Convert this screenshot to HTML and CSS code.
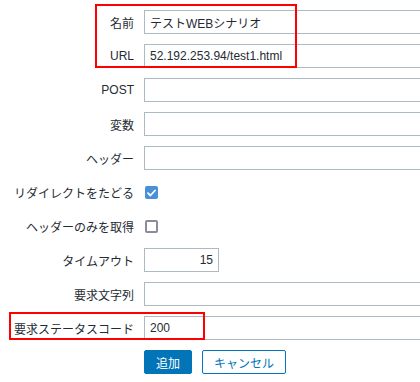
FILE: index.html
```html
<!DOCTYPE html>
<html lang="ja">
<head>
    <meta charset="UTF-8">
    <meta name="viewport" content="width=device-width, initial-scale=1.0">
    <title>Webシナリオ</title>
    <link rel="stylesheet" href="styles.css">
</head>
<body>

    <div class="page">
        <form class="form-grid">
            <label for="name">名前</label>
            <div class="field"><input type="text" id="name" class="wide" value="テストWEBシナリオ"></div>

            <label for="url">URL</label>
            <div class="field"><input type="text" id="url" class="wide" value="52.192.253.94/test1.html"></div>

            <label for="post">POST</label>
            <div class="field"><input type="text" id="post" class="wide"></div>

            <label for="vars">変数</label>
            <div class="field"><input type="text" id="vars" class="wide"></div>

            <label for="headers">ヘッダー</label>
            <div class="field"><input type="text" id="headers" class="wide"></div>

            <label for="follow">リダイレクトをたどる</label>
            <div class="field">
                <span class="check checked" id="follow" role="checkbox" aria-checked="true">
                    <svg width="9" height="8" viewBox="0 0 9 8"><path d="M1 4.2 L3.4 6.5 L8 1.5" fill="none" stroke="#fff" stroke-width="1.8" stroke-linecap="round" stroke-linejoin="round"/></svg>
                </span>
            </div>

            <label for="headonly">ヘッダーのみを取得</label>
            <div class="field">
                <span class="check" id="headonly" role="checkbox" aria-checked="false"></span>
            </div>

            <label for="timeout">タイムアウト</label>
            <div class="field"><input type="text" id="timeout" class="short" value="15"></div>

            <label for="required">要求文字列</label>
            <div class="field"><input type="text" id="required" class="wide"></div>

            <label for="status">要求ステータスコード</label>
            <div class="field"><input type="text" id="status" class="wide" value="200"></div>

            <span></span>
            <div class="field buttons">
                <button type="button" class="btn-add">追加</button>
                <button type="button" class="btn-cancel">キャンセル</button>
            </div>
        </form>

        <!-- annotation boxes -->
        <div class="mark mark-top"></div>
        <div class="mark mark-status"></div>
    </div>

</body>
</html>
```

FILE: styles.css
```css
body {
    margin: 0;
    padding: 0;
    background-color: #ffffff;
    font-family: "Liberation Sans", Arial, "Noto Sans CJK JP", sans-serif;
    font-size: 12px;
    color: #1f2c33;
}

.page {
    position: relative;
    width: 420px;
    height: 382px;
    overflow: hidden;
}

.form-grid {
    display: grid;
    grid-template-columns: 134px 460px;
    grid-auto-rows: 24px;
    column-gap: 10px;
    row-gap: 10px;
    padding-top: 10px;
}

.form-grid label {
    display: flex;
    align-items: center;
    justify-content: flex-end;
    white-space: nowrap;
}

.field {
    display: flex;
    align-items: center;
}

input[type="text"] {
    height: 24px;
    box-sizing: border-box;
    border: 1px solid #acbbc2;
    border-radius: 0;
    padding: 0 5px;
    font-family: inherit;
    font-size: 12px;
    color: #1f2c33;
    background-color: #ffffff;
    outline: none;
}

.wide {
    width: 453px;
}

.short {
    width: 75px;
    text-align: right;
}

.check {
    display: flex;
    align-items: center;
    justify-content: center;
    width: 13px;
    height: 13px;
    margin: 1px 0 0 1px;
    box-sizing: border-box;
    border: 2px solid #8c8a9b;
    border-radius: 2px;
    background-color: #ffffff;
}

.check.checked {
    border: none;
    background-color: #4a90d9;
}

.buttons {
    gap: 10px;
}

button {
    height: 24px;
    box-sizing: border-box;
    padding: 0 10px;
    font-family: inherit;
    font-size: 12px;
    border: 1px solid #0275b8;
    border-radius: 2px;
    cursor: pointer;
}

.btn-add {
    width: 48px;
    background-color: #0275b8;
    color: #ffffff;
}

.btn-cancel {
    width: 84px;
    background-color: #ffffff;
    color: #0275b8;
}

.mark {
    position: absolute;
    border: 2px solid #ff0000;
    box-sizing: border-box;
}

.mark-top {
    left: 95px;
    top: 4px;
    width: 202px;
    height: 64px;
}

.mark-status {
    left: 9px;
    top: 312px;
    width: 196px;
    height: 28px;
}
```
